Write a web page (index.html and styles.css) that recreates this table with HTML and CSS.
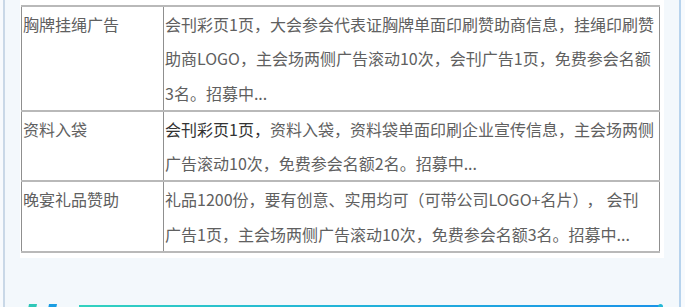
FILE: index.html
```html
<!DOCTYPE html>
<html lang="zh-CN">
<head>
<meta charset="utf-8">
<title>赞助项目</title>
<link rel="stylesheet" href="styles.css">
</head>
<body>
<div class="panel">
  <div class="sheet">
    <table class="spec">
      <colgroup>
        <col class="col-name">
        <col class="col-desc">
      </colgroup>
      <tbody>
        <tr>
          <td>胸牌挂绳广告</td>
          <td>会刊彩页1页，大会参会代表证胸牌单面印刷赞助商信息，挂绳印刷赞<br>助商LOGO，主会场两侧广告滚动10次，会刊广告1页，免费参会名额<br>3名。招募中...</td>
        </tr>
        <tr>
          <td>资料入袋</td>
          <td><span class="strong">会刊彩页1页，</span>资料入袋，资料袋单面印刷企业宣传信息，主会场两侧<br>广告滚动10次，免费参会名额2名。招募中...</td>
        </tr>
        <tr>
          <td>晚宴礼品赞助</td>
          <td>礼品1200份，要有创意、实用均可（可带公司LOGO+名片）<span class="gap">，</span>会刊<br>广告1页，主会场两侧广告滚动10次，免费参会名额3名。招募中...</td>
        </tr>
      </tbody>
    </table>
  </div>

  <div class="section-head">
    <svg class="head-mark" width="30" height="20" viewBox="0 0 30 20" aria-hidden="true">
      <polygon points="2,0 10,0 6,20 -2,20" fill="#2fc7b8"/>
      <polygon points="22,0 30,0 26,20 18,20" fill="#1a9de2"/>
    </svg>
    <div class="head-rule"></div>
  </div>
</div>
</body>
</html>
```
FILE: styles.css
```css
html, body {
  margin: 0;
  padding: 0;
}

body {
  width: 685px;
  height: 307px;
  overflow: hidden;
  background: #f7fafd;
  font-family: "Noto Sans CJK SC", "Noto Sans", sans-serif;
}

.panel {
  margin-left: 3px;
  width: 674px;
  height: 330px;
  background: #f3f8fc;
  border-left: 2px solid #c9d8e7;
  border-right: 2px solid #b7d3ed;
}

.sheet {
  margin-left: 15px;
  width: 643px;
  padding: 5px 0 5px 1px;
  background: #ffffff;
}

.spec {
  width: 639px;
  border-collapse: collapse;
  table-layout: fixed;
  font-size: 16px;
  line-height: 34.3px;
  color: #606060;
}

.col-name {
  width: 142px;
}

.spec td {
  vertical-align: top;
  padding: 0 0 0 1px;
  white-space: nowrap;
  border-left: 1px solid #8f8f8f;
  border-right: 1px solid #8f8f8f;
  border-top: 2px solid #b9b9b9;
  border-bottom: 2px solid #b9b9b9;
}

.spec .strong {
  color: #333333;
}

.spec .gap {
  margin: 0 4px 0 6px;
}

.section-head {
  display: flex;
  align-items: flex-start;
  margin-top: 46px;
  margin-left: 22px;
  margin-right: 18px;
}

.head-mark {
  flex: none;
  display: block;
}

.head-rule {
  position: relative;
  flex: 1;
  height: 2px;
  margin-top: 1px;
  margin-left: 22px;
  background: linear-gradient(90deg, #33d2bf 0%, #22b4d8 45%, #1a93e8 100%);
}

.head-rule::after {
  content: "";
  position: absolute;
  right: -2px;
  top: -1.5px;
  width: 5px;
  height: 5px;
  border-radius: 50%;
  background: #24b8d6;
}
```
